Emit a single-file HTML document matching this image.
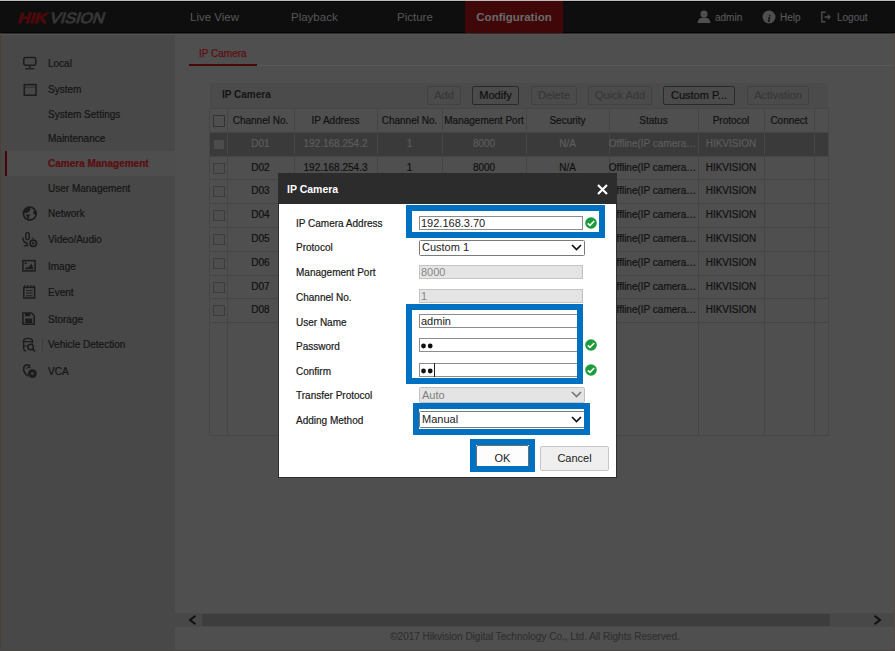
<!DOCTYPE html>
<html><head><meta charset="utf-8">
<style>
*{margin:0;padding:0;box-sizing:border-box}
html,body{width:895px;height:651px;overflow:hidden}
body{position:relative;background:#4f4f4f;font-family:"Liberation Sans",sans-serif;font-size:10px;color:#1a1a1a}
.a{position:absolute;white-space:nowrap}
#top{left:0;top:0;width:895px;height:33px;background:#0e0e0e;border-top:1px solid #bdbdbd}
.nav{position:absolute;top:1px;height:32px;line-height:32px;font-size:11.5px;color:#575757}
.nv2{position:absolute;top:2px;height:32px;line-height:32px;font-size:10px;color:#575757;-webkit-text-stroke:0.15px currentColor}
#side{left:0;top:35px;width:175px;height:616px;background:#484848}
.si{position:absolute;left:48px;font-size:10px;color:#151515;line-height:12px;-webkit-text-stroke:0.2px currentColor}
.ic{position:absolute;left:23px}
.t{position:absolute;line-height:12px;font-size:10px}
.col{position:absolute;top:108px;height:327px;border-left:1px solid #454545}
.row{position:absolute;left:210px;width:618px;height:24px;border-top:1px solid #454545}
.cell{position:absolute;text-align:center;line-height:22px;font-size:10px;color:#111;-webkit-text-stroke:0.2px currentColor}
.btn{position:absolute;top:86px;height:19px;border:1px solid #424242;border-radius:2px;line-height:17px;text-align:center;font-size:11px;color:#383838;-webkit-text-stroke:0.2px currentColor}
.lbl{position:absolute;left:296px;font-size:10px;color:#1a1a1a;line-height:12px;-webkit-text-stroke:0.2px #1a1a1a}
.inp{position:absolute;left:419px;width:164px;height:14px;border:1px solid #8c8c8c;background:#fff;font-size:11px;line-height:12px;padding-left:1px;color:#222}
.dis{background:#e4e4e4;border-color:#c4c4c4;color:#8a8a8a}
.blue{position:absolute;border:6px solid #0070c0}
.chk{position:absolute;width:12px;height:12px}
.sel{border-color:#7b7b7b;border-radius:1.5px;padding-left:2px}
.sel.dis{border-color:#c2c2c2;color:#7e7e7e}
.chev{position:absolute;left:151px}
</style></head><body>
<!-- header -->
<div class="a" id="top"></div>
<div class="a" style="left:0;top:1px;width:895px;height:1px;background:#050505"></div>
<div class="a" style="left:0;top:32px;width:895px;height:1px;background:#060606"></div>
<div class="a" style="left:0;top:33px;width:895px;height:1px;background:#2c2c2c"></div>
<div class="a" style="left:0;top:34px;width:895px;height:1px;background:#545454"></div>
<svg class="a" style="left:0;top:0" width="120" height="33" viewBox="0 0 120 33">
<g transform="translate(17,22.6) skewX(-17)"><text x="0" y="0" font-family="Liberation Sans" font-weight="bold" font-size="14.8" fill="#4c090c" stroke="#4c090c" stroke-width="0.8" textLength="29" lengthAdjust="spacingAndGlyphs">HIK</text>
<text x="32" y="0" font-family="Liberation Sans" font-size="14.8" fill="#363636" stroke="#363636" stroke-width="0.9" textLength="54.5" lengthAdjust="spacingAndGlyphs">VISION</text></g>
</svg>
<div class="nav" style="left:190px">Live View</div>
<div class="nav" style="left:291px">Playback</div>
<div class="nav" style="left:397px">Picture</div>
<div class="a" style="left:465px;top:1px;width:98px;height:32px;background:#3f0708"></div>
<div class="nav" style="left:465px;width:98px;text-align:center;font-weight:bold;color:#6a6a6a">Configuration</div>
<svg class="a" style="left:697px;top:10px" width="14" height="13" viewBox="0 0 14 13"><circle cx="7" cy="4" r="3.6" fill="#4f4f4f"/><path d="M0.5 13 C1 8.5 4 7.6 7 7.6 C10 7.6 13 8.5 13.5 13Z" fill="#4f4f4f"/></svg>
<div class="nv2" style="left:715px">admin</div>
<svg class="a" style="left:762px;top:10px" width="14" height="14" viewBox="0 0 14 14"><circle cx="7" cy="7" r="6.5" fill="#4f4f4f"/><text x="7" y="11.5" text-anchor="middle" font-family="Liberation Serif" font-style="italic" font-weight="bold" font-size="11" fill="#101010">i</text></svg>
<div class="nv2" style="left:780px">Help</div>
<svg class="a" style="left:820px;top:11px" width="13" height="12" viewBox="0 0 13 12"><path d="M5.5 1.2H1.8V10.8H5.5" fill="none" stroke="#4a4a4a" stroke-width="1.5"/><path d="M4.5 6H8.5" stroke="#4a4a4a" stroke-width="1.6"/><path d="M7.8 3L11 6L7.8 9Z" fill="#4a4a4a"/></svg>
<div class="nv2" style="left:837px">Logout</div>

<!-- sidebar -->
<div class="a" id="side"></div>
<div class="a" style="left:5px;top:151px;width:170px;height:25px;background:#4d4e4d"></div>
<div class="a" style="left:5px;top:151px;width:2px;height:25px;background:#43050a"></div>
<svg class="a" style="left:0;top:0" width="50" height="390" viewBox="0 0 50 390">
<g fill="none" stroke="#1c1c1c" stroke-width="1.5">
<rect x="23.8" y="57.6" width="12" height="7.6" rx="1.6"/>
<path d="M29.8 65.2V68.3" stroke-width="1.4"/>
<path d="M25.3 68.8H34.4" stroke-width="1.3"/>
<rect x="24.3" y="84.6" width="11.7" height="10.6"/>
<path d="M24.5 87.2H35.8" stroke-width="0.9" stroke="#2e2e2e"/>
<circle cx="29.8" cy="213.6" r="6.4" stroke-width="1.8"/>
<rect x="25.8" y="232.6" width="3.4" height="7.2" rx="1.7" stroke-width="1.4"/>
<path d="M22.8 237.6C23 241.5 25 243 27.5 243.2M27.2 243V245.6M23.8 245.6H28.4" stroke-width="1.4"/>
<circle cx="33.3" cy="243.3" r="3.2" stroke-width="1.6"/>
<rect x="22.9" y="260.6" width="12.2" height="10.3" stroke-width="1.5"/>
<rect x="23.8" y="287.4" width="10.8" height="10.6" stroke-width="1.5"/>
<path d="M26 290.5H32.5M26 293H32.5M26 295.8H32.5" stroke-width="1"/>
<path d="M23" stroke-width="1"/>
<path d="M22.9 313V324.3H34.2V315.8L31.6 313Z" stroke-width="1.5"/>
<path d="M23.6 349.5V341C23.6 339.2 25 338.4 28 338.4S32.4 339.2 32.4 341V343.2" stroke-width="1.4"/>
<path d="M23.6 341.6H32.4M23.6 346H26.8" stroke-width="1.1"/>
<path d="M23.6 349.8L25.8 351.2" stroke-width="1.4"/>
<circle cx="30.6" cy="347" r="2.8" stroke-width="1.5"/>
<path d="M32.6 349L35 351.5" stroke-width="1.7"/>
<path d="M30.5 366.2C28 364 24.5 364.5 23.8 367.5C23 370.5 25 374.5 28.2 376" stroke-width="1.6"/>
<path d="M26.5 368.8C27.3 367 29 366.8 30.3 367.8" stroke-width="1.2"/>
</g>
<g fill="#1c1c1c">
<path d="M24 209.5C25.5 207.8 27.5 207.2 29.5 207.2L30.5 209.8L28.5 212.3L25.5 213.2L23.8 212Z"/>
<path d="M25.8 214.5L30.3 214.5L28.8 217L28.6 219.5L27.4 219.5L27.2 217Z"/>
<path d="M32.8 211.5L35.8 211L36 214L34 214.5Z"/>
<circle cx="32.8" cy="238" r="0.8"/>
<path d="M32.3 241.6L34.9 243.3L32.3 245Z"/>
<circle cx="25.7" cy="263.2" r="1.1"/>
<path d="M24.8 269.2L27 266.5L28.3 267.8L31.5 263.6L33.5 269.2Z"/>
<rect x="24" y="285" width="1.2" height="3"/><rect x="27" y="285" width="1.2" height="3"/><rect x="30.2" y="285" width="1.2" height="3"/><rect x="33.2" y="285" width="1.2" height="3"/>
<rect x="25" y="313" width="5.3" height="3.2"/>
<rect x="25.2" y="318.5" width="7" height="4.6"/>
<circle cx="32.4" cy="373.6" r="4.4"/>
</g>
<circle cx="32.4" cy="373.6" r="1.6" fill="#3c3c3c"/>
</svg>
<div class="si" style="top:58px">Local</div>
<div class="si" style="top:84px">System</div>
<div class="si" style="top:109px">System Settings</div>
<div class="si" style="top:133px">Maintenance</div>
<div class="si" style="top:158px;font-weight:bold;color:#5c0d10">Camera Management</div>
<div class="si" style="top:183px">User Management</div>
<div class="si" style="top:208px">Network</div>
<div class="si" style="top:234px">Video/Audio</div>
<div class="si" style="top:261px">Image</div>
<div class="si" style="top:287px">Event</div>
<div class="si" style="top:314px">Storage</div>
<div class="a" style="left:42px;top:338px;width:1px;height:13px;background:#3e3e3e"></div>
<div class="si" style="top:339px">Vehicle Detection</div>
<div class="si" style="top:366px">VCA</div>

<!-- content -->
<div class="t" style="left:199px;top:48px;font-size:10px;color:#5e0e12;-webkit-text-stroke:0.25px currentColor">IP Camera</div>
<div class="a" style="left:189px;top:64px;width:68px;height:2px;background:#4a0709"></div>
<div class="a" style="left:257px;top:65px;width:638px;height:1px;background:#595959"></div>

<!-- table -->
<div class="a" style="left:210px;top:83px;width:618px;height:25px;background:#4b4b4b"></div>
<div class="a" style="left:209px;top:108px;width:620px;height:328px;border:1px solid #464646"></div>
<div class="t" style="left:222px;top:89px;font-weight:bold;color:#141414">IP Camera</div>
<div class="btn" style="left:427px;width:34px">Add</div>
<div class="btn" style="left:472px;width:47px;color:#0f0f0f;border-color:#2a2a2a">Modify</div>
<div class="btn" style="left:531px;width:46px">Delete</div>
<div class="btn" style="left:588px;width:64px">Quick Add</div>
<div class="btn" style="left:663px;width:72px;color:#0f0f0f;border-color:#2a2a2a">Custom P...</div>
<div class="btn" style="left:747px;width:62px">Activation</div>

<div class="a" style="left:210px;top:108px;width:618px;height:1px;background:#474747"></div>
<div class="a" style="left:210px;top:132px;width:618px;height:24px;background:#3a3a3a"></div>
<div class="row" style="top:132px"></div>
<div class="row" style="top:156px"></div>
<div class="row" style="top:179px"></div>
<div class="row" style="top:203px"></div>
<div class="row" style="top:227px"></div>
<div class="row" style="top:251px"></div>
<div class="row" style="top:275px"></div>
<div class="row" style="top:298px"></div>
<div class="row" style="top:322px"></div>
<div class="col" style="left:227px"></div>
<div class="col" style="left:294px"></div>
<div class="col" style="left:377px"></div>
<div class="col" style="left:442px"></div>
<div class="col" style="left:526px"></div>
<div class="col" style="left:609px"></div>
<div class="col" style="left:698px"></div>
<div class="col" style="left:764px"></div>
<div class="col" style="left:814px"></div>

<!--cells-->
<div class="a" style="left:213px;top:115px;width:12px;height:12px;border:1px solid #333"></div>
<div class="cell" style="left:227px;top:110px;width:67px;color:#121212">Channel No.</div>
<div class="cell" style="left:294px;top:110px;width:83px;color:#121212">IP Address</div>
<div class="cell" style="left:377px;top:110px;width:65px;color:#121212">Channel No.</div>
<div class="cell" style="left:442px;top:110px;width:84px;color:#121212">Management Port</div>
<div class="cell" style="left:526px;top:110px;width:83px;color:#121212">Security</div>
<div class="cell" style="left:609px;top:110px;width:89px;color:#121212">Status</div>
<div class="cell" style="left:698px;top:110px;width:66px;color:#121212">Protocol</div>
<div class="cell" style="left:764px;top:110px;width:50px;color:#121212">Connect</div>
<div class="a" style="left:214px;top:140px;width:10px;height:9px;background:#4c4c4c"></div>
<div class="cell" style="left:227px;top:133px;width:67px;color:#5c5c5c">D01</div>
<div class="cell" style="left:294px;top:133px;width:83px;color:#5c5c5c">192.168.254.2</div>
<div class="cell" style="left:377px;top:133px;width:65px;color:#5c5c5c">1</div>
<div class="cell" style="left:442px;top:133px;width:84px;color:#5c5c5c">8000</div>
<div class="cell" style="left:526px;top:133px;width:83px;color:#5c5c5c">N/A</div>
<div class="cell" style="left:608px;top:133px;width:89px;color:#5c5c5c">Offline(IP camera…</div>
<div class="cell" style="left:698px;top:133px;width:66px;color:#5c5c5c">HIKVISION</div>
<div class="a" style="left:213px;top:163px;width:12px;height:11px;border:1px solid #3c3c3c;background:#4e4e4e"></div>
<div class="cell" style="left:227px;top:157px;width:67px;color:#111">D02</div>
<div class="cell" style="left:294px;top:157px;width:83px;color:#111">192.168.254.3</div>
<div class="cell" style="left:377px;top:157px;width:65px;color:#111">1</div>
<div class="cell" style="left:442px;top:157px;width:84px;color:#111">8000</div>
<div class="cell" style="left:526px;top:157px;width:83px;color:#111">N/A</div>
<div class="cell" style="left:608px;top:157px;width:89px;color:#111">Offline(IP camera…</div>
<div class="cell" style="left:698px;top:157px;width:66px;color:#111">HIKVISION</div>
<div class="a" style="left:213px;top:186px;width:12px;height:11px;border:1px solid #3c3c3c;background:#4e4e4e"></div>
<div class="cell" style="left:227px;top:180px;width:67px;color:#111">D03</div>
<div class="cell" style="left:608px;top:180px;width:89px;color:#111">Offline(IP camera…</div>
<div class="cell" style="left:698px;top:180px;width:66px;color:#111">HIKVISION</div>
<div class="a" style="left:213px;top:210px;width:12px;height:11px;border:1px solid #3c3c3c;background:#4e4e4e"></div>
<div class="cell" style="left:227px;top:204px;width:67px;color:#111">D04</div>
<div class="cell" style="left:608px;top:204px;width:89px;color:#111">Offline(IP camera…</div>
<div class="cell" style="left:698px;top:204px;width:66px;color:#111">HIKVISION</div>
<div class="a" style="left:213px;top:234px;width:12px;height:11px;border:1px solid #3c3c3c;background:#4e4e4e"></div>
<div class="cell" style="left:227px;top:228px;width:67px;color:#111">D05</div>
<div class="cell" style="left:608px;top:228px;width:89px;color:#111">Offline(IP camera…</div>
<div class="cell" style="left:698px;top:228px;width:66px;color:#111">HIKVISION</div>
<div class="a" style="left:213px;top:258px;width:12px;height:11px;border:1px solid #3c3c3c;background:#4e4e4e"></div>
<div class="cell" style="left:227px;top:252px;width:67px;color:#111">D06</div>
<div class="cell" style="left:608px;top:252px;width:89px;color:#111">Offline(IP camera…</div>
<div class="cell" style="left:698px;top:252px;width:66px;color:#111">HIKVISION</div>
<div class="a" style="left:213px;top:282px;width:12px;height:11px;border:1px solid #3c3c3c;background:#4e4e4e"></div>
<div class="cell" style="left:227px;top:276px;width:67px;color:#111">D07</div>
<div class="cell" style="left:608px;top:276px;width:89px;color:#111">Offline(IP camera…</div>
<div class="cell" style="left:698px;top:276px;width:66px;color:#111">HIKVISION</div>
<div class="a" style="left:213px;top:305px;width:12px;height:11px;border:1px solid #3c3c3c;background:#4e4e4e"></div>
<div class="cell" style="left:227px;top:299px;width:67px;color:#111">D08</div>
<div class="cell" style="left:608px;top:299px;width:89px;color:#111">Offline(IP camera…</div>
<div class="cell" style="left:698px;top:299px;width:66px;color:#111">HIKVISION</div>
<!--/cells-->

<!-- scrollbar -->
<div class="a" style="left:175px;top:613px;width:720px;height:14px;background:#484848"></div>
<div class="a" style="left:202px;top:614px;width:628px;height:12px;background:#3d3d3d"></div>
<svg class="a" style="left:188px;top:615px" width="9" height="10" viewBox="0 0 9 10"><path d="M7.5 0.8L2 5L7.5 9.2" fill="none" stroke="#111" stroke-width="2"/></svg>
<svg class="a" style="left:873px;top:615px" width="9" height="10" viewBox="0 0 9 10"><path d="M1.5 0.8L7 5L1.5 9.2" fill="none" stroke="#111" stroke-width="2"/></svg>
<div class="t" style="left:175px;width:720px;text-align:center;top:631px;color:#2f2f2f;-webkit-text-stroke:0.15px currentColor">©2017 Hikvision Digital Technology Co., Ltd. All Rights Reserved.</div>

<!-- dialog -->
<div class="a" style="left:278px;top:173px;width:339px;height:305px;background:#fff;border:1px solid #2e2e2e;border-top:0"></div>
<div class="a" style="left:278px;top:173px;width:339px;height:31px;background:#2c2c2c"></div>
<div class="t" style="left:287px;top:183px;font-weight:bold;color:#fff;font-size:10.5px">IP Camera</div>
<svg class="a" style="left:597px;top:184px" width="11" height="11" viewBox="0 0 11 11"><path d="M1 1L10 10M10 1L1 10" stroke="#fff" stroke-width="2.2"/></svg>

<div class="lbl" style="top:218px">IP Camera Address</div>
<div class="lbl" style="top:242px">Protocol</div>
<div class="lbl" style="top:267px">Management Port</div>
<div class="lbl" style="top:292px">Channel No.</div>
<div class="lbl" style="top:317px">User Name</div>
<div class="lbl" style="top:341px">Password</div>
<div class="lbl" style="top:366px">Confirm</div>
<div class="lbl" style="top:390px">Transfer Protocol</div>
<div class="lbl" style="top:415px">Adding Method</div>

<div class="inp" style="top:216px;padding-left:1px">192.168.3.70</div>
<div class="inp sel" style="top:240px;height:16px;width:166px">Custom 1<svg class="chev" style="top:2.5px" width="11" height="7" viewBox="0 0 11 7"><path d="M1 1L5.5 5.5L10 1" fill="none" stroke="#111" stroke-width="1.7"/></svg></div>
<div class="inp dis" style="top:265px">8000</div>
<div class="inp dis" style="top:289px">1</div>
<div class="inp" style="top:314px;padding-left:1px">admin</div>
<div class="inp" style="top:338px"><svg class="a" style="left:0;top:4px" width="14" height="6" viewBox="0 0 14 6"><circle cx="3.5" cy="3" r="2.4" fill="#111"/><circle cx="10.2" cy="3" r="2.4" fill="#111"/></svg></div>
<div class="inp" style="top:363px"><svg class="a" style="left:0;top:4px" width="14" height="6" viewBox="0 0 14 6"><circle cx="3.5" cy="3" r="2.4" fill="#111"/><circle cx="10.2" cy="3" r="2.4" fill="#111"/></svg></div>
<div class="a" style="left:434px;top:363px;width:1px;height:14px;background:#222"></div>
<div class="inp sel dis" style="top:387px;height:16px;width:166px;line-height:14px">Auto<svg class="chev" style="top:2.5px" width="11" height="7" viewBox="0 0 11 7"><path d="M1 1L5.5 5.5L10 1" fill="none" stroke="#777" stroke-width="1.7"/></svg></div>
<div class="inp sel" style="top:411px;height:17px;width:166px;line-height:15px">Manual<svg class="chev" style="top:4px" width="11" height="7" viewBox="0 0 11 7"><path d="M1 1L5.5 5.5L10 1" fill="none" stroke="#111" stroke-width="1.7"/></svg></div>

<div class="a" style="left:476px;top:445px;width:53px;height:25px;background:#fdfdfd;border:1.5px solid #6e6e6e;border-radius:2px;text-align:center;line-height:24px;font-size:11px;color:#222">OK</div>
<div class="a" style="left:540px;top:446px;width:69px;height:25px;background:#efefef;border:1px solid #c6c6c6;border-radius:2px;text-align:center;line-height:23px;font-size:11px;color:#222">Cancel</div>

<div class="blue" style="left:406px;top:205px;width:199px;height:33px"></div>
<div class="blue" style="left:406px;top:304px;width:177px;height:80px"></div>
<div class="blue" style="left:413px;top:403px;width:177px;height:32px"></div>
<div class="blue" style="left:470px;top:439px;width:65px;height:33px"></div>

<svg class="chk" style="left:584.5px;top:217px" viewBox="0 0 12 12"><circle cx="6" cy="6" r="5.8" fill="#1a9c3a"/><path d="M2.8 6.3L5 8.3L9.2 4" fill="none" stroke="#fff" stroke-width="1.6"/></svg>
<svg class="chk" style="left:584.5px;top:339px" viewBox="0 0 12 12"><circle cx="6" cy="6" r="5.8" fill="#1a9c3a"/><path d="M2.8 6.3L5 8.3L9.2 4" fill="none" stroke="#fff" stroke-width="1.6"/></svg>
<svg class="chk" style="left:584.5px;top:364px" viewBox="0 0 12 12"><circle cx="6" cy="6" r="5.8" fill="#1a9c3a"/><path d="M2.8 6.3L5 8.3L9.2 4" fill="none" stroke="#fff" stroke-width="1.6"/></svg>
<div class="a" style="left:0;top:33px;width:1px;height:618px;background:#4a3f39"></div>
<div class="a" style="left:894px;top:33px;width:1px;height:618px;background:#524846"></div>
<div class="a" style="left:0;top:650px;width:895px;height:1px;background:#4b4541"></div>
</body></html>
